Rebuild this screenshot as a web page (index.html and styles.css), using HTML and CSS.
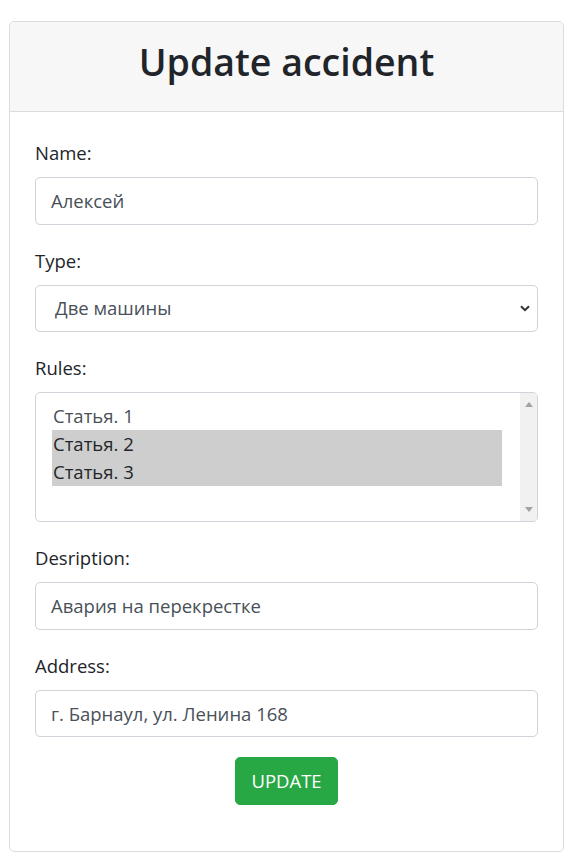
FILE: index.html
```html
<!DOCTYPE html>
<html lang="ru">
<head>
<meta charset="utf-8">
<title>Update accident</title>
<link rel="stylesheet" href="styles.css">
</head>
<body>
<div class="page">
  <div class="card">
    <div class="card-header">
      <h2 class="title">Update accident</h2>
    </div>
    <div class="card-body">
      <form class="form">
        <div class="group">
          <label class="label">Name:</label>
          <div class="control">Алексей</div>
        </div>
        <div class="group">
          <label class="label">Type:</label>
          <div class="control select">
            <span class="select-text">Две машины</span>
            <svg class="chevron" width="10" height="7" viewBox="0 0 10 7"><path d="M1 1.2 L5 5.2 L9 1.2" fill="none" stroke="#333" stroke-width="2"/></svg>
          </div>
        </div>
        <div class="group">
          <label class="label">Rules:</label>
          <div class="listbox">
            <div class="options">
              <div class="option">Статья. 1</div>
              <div class="option selected">Статья. 2</div>
              <div class="option selected">Статья. 3</div>
            </div>
            <div class="scrollbar">
              <svg class="arrow" width="8" height="5" viewBox="0 0 8 5"><path d="M0 5 L4 0 L8 5 Z" fill="#a3a3a3"/></svg>
              <svg class="arrow" width="8" height="5" viewBox="0 0 8 5"><path d="M0 0 L4 5 L8 0 Z" fill="#a3a3a3"/></svg>
            </div>
          </div>
        </div>
        <div class="group">
          <label class="label">Desription:</label>
          <div class="control">Авария на перекрестке</div>
        </div>
        <div class="group">
          <label class="label">Address:</label>
          <div class="control">г. Барнаул, ул. Ленина 168</div>
        </div>
        <div class="actions">
          <button type="button" class="btn">UPDATE</button>
        </div>
      </form>
    </div>
  </div>
</div>
</body>
</html>
```
FILE: styles.css
```css
html, body {
  margin: 0;
  padding: 0;
  background: #fff;
}
body {
  font-family: "Open Sans", "Noto Sans", sans-serif;
  font-size: 18.5px;
  color: #212529;
}
.page {
  padding: 21px 0 0 9px;
}
.card {
  width: 553px;
  border: 1px solid #dcdcdc;
  border-radius: 5px;
  background: #fff;
}
.card-header {
  background: #f7f7f7;
  border-bottom: 1px solid #dcdcdc;
  border-radius: 4px 4px 0 0;
  padding: 16px 25px 25px;
  height: 48px;
  text-align: center;
}
.title {
  margin: 0;
  font-size: 37.5px;
  font-weight: 600;
  line-height: 48px;
  color: #212529;
}
.card-body {
  padding: 25px 25px 46px;
}
.form {
  display: flex;
  flex-direction: column;
  gap: 20px;
}
.group {
  display: flex;
  flex-direction: column;
  gap: 10px;
}
.label {
  display: block;
  height: 30px;
  line-height: 31px;
}
.control {
  box-sizing: border-box;
  height: 47.5px;
  border: 1px solid #ced4da;
  border-radius: 5px;
  padding: 0 15px;
  line-height: 46px;
  color: #495057;
}
.select {
  display: flex;
  align-items: center;
  justify-content: space-between;
  padding: 0 7px 0 19px;
}
.select-text {
  line-height: 46px;
}
.chevron {
  display: block;
}
.listbox {
  box-sizing: border-box;
  height: 130px;
  border: 1px solid #ced4da;
  border-radius: 5px;
  display: flex;
  overflow: hidden;
  color: #495057;
}
.options {
  flex: 1;
  padding: 9px 18px 0 16px;
}
.option {
  height: 28px;
  line-height: 28px;
  padding-left: 1px;
}
.option.selected {
  background: #cecece;
  color: #212529;
}
.scrollbar {
  width: 17px;
  background: #f1f1f1;
  display: flex;
  flex-direction: column;
  justify-content: space-between;
  align-items: center;
  padding: 9px 0 9px;
}
.arrow {
  display: block;
}
.actions {
  display: flex;
  justify-content: center;
}
.btn {
  box-sizing: border-box;
  width: 103px;
  height: 48px;
  border: 1px solid #28a745;
  border-radius: 5px;
  background: #28a745;
  color: #fff;
  font-family: "Open Sans", "Noto Sans", sans-serif;
  font-size: 18.5px;
  padding: 0;
  line-height: 46px;
}
```
